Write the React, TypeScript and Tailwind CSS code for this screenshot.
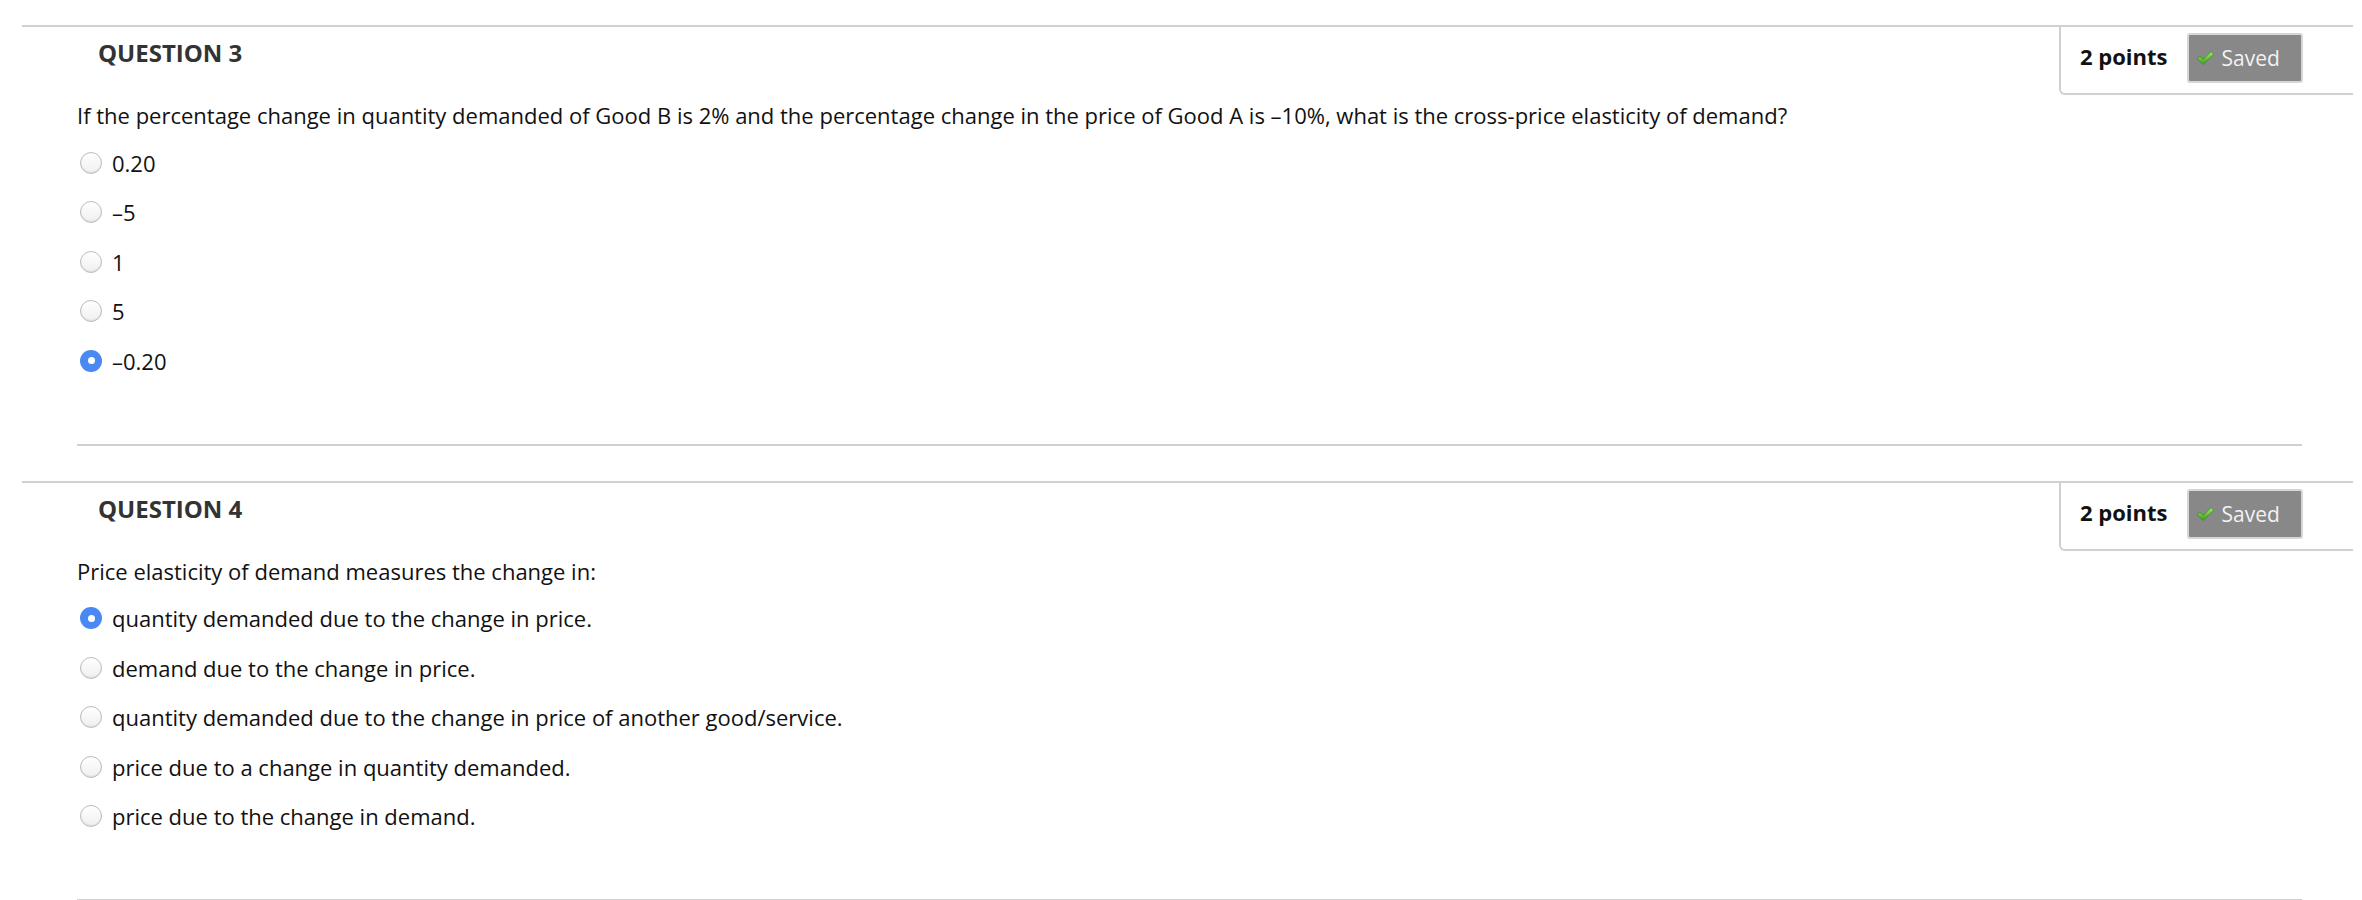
import React from "react";

type Q = {
  title: string;
  text: string;
  options: string[];
  selected: number;
};

const questions: Q[] = [
  {
    title: "QUESTION 3",
    text: "If the percentage change in quantity demanded of Good B is 2% and the percentage change in the price of Good A is \u201310%, what is the cross-price elasticity of demand?",
    options: ["0.20", "\u20135", "1", "5", "\u20130.20"],
    selected: 4,
  },
  {
    title: "QUESTION 4",
    text: "Price elasticity of demand measures the change in:",
    options: [
      "quantity demanded due to the change in price.",
      "demand due to the change in price.",
      "quantity demanded due to the change in price of another good/service.",
      "price due to a change in quantity demanded.",
      "price due to the change in demand.",
    ],
    selected: 0,
  },
];

function Check() {
  return (
    <svg width="19" height="16" viewBox="0 0 19 16" className="shrink-0">
      <defs>
        <linearGradient id="chk" x1="0" y1="0" x2="0" y2="1">
          <stop offset="0" stopColor="#9be86a" />
          <stop offset="1" stopColor="#3f9e1e" />
        </linearGradient>
      </defs>
      <path
        d="M1 8.8 L3.9 6 L7.2 9.2 L15 1.5 L17.8 4.3 L7.2 14.5 Z"
        fill="url(#chk)"
        stroke="#3f8a22"
        strokeWidth="0.8"
        strokeLinejoin="round"
      />
    </svg>
  );
}

function Radio({ on }: { on: boolean }) {
  if (on) {
    return (
      <span className="flex h-[22px] w-[22px] shrink-0 items-center justify-center rounded-full bg-[#4a89f3]">
        <span className="h-[7px] w-[7px] rounded-full bg-white" />
      </span>
    );
  }
  return (
    <span className="h-[22px] w-[22px] shrink-0 rounded-full border border-[#bcbcbc] bg-gradient-to-b from-white to-[#efefef] shadow-[inset_0_-1px_1px_rgba(0,0,0,0.08)]" />
  );
}

function Question({ q }: { q: Q }) {
  return (
    <section className="ml-[22px] mr-[9px] border-t-2 border-[#d0d0d0]">
      <div className="flex items-start justify-between">
        <h2 className="ml-[76px] mt-[10px] text-[24px] font-bold leading-[32px] text-[#333]">
          {q.title}
        </h2>
        <div className="flex h-[68px] w-[294px] items-start gap-[19px] rounded-bl-[6px] border-b-2 border-l-2 border-[#d0d0d0] pl-[19px]">
          <span className="mt-[14px] text-[22px] font-bold leading-[30px] text-[#111]">2 points</span>
          <span className="mt-[6px] flex h-[50px] w-[116px] items-center gap-[7px] rounded-[3px] border-2 border-[#d6d6d6] bg-[#888888] pl-[7px]">
            <Check />
            <span className="text-[21px] leading-[28px] text-[#f2f2f2]">Saved</span>
          </span>
        </div>
      </div>
      <p className="ml-[55px] mt-[4px] text-[22px] leading-[32px] text-[#111]">{q.text}</p>
      <div className="ml-[58px] mt-[7px] flex flex-col">
        {q.options.map((o, i) => (
          <label key={i} className="flex h-[49.5px] items-center gap-[10px]">
            <Radio on={i === q.selected} />
            <span className="text-[22px] leading-[32px] text-[#111]">{o}</span>
          </label>
        ))}
      </div>
      <div className="ml-[55px] mr-[51px] mt-[58px] mb-[35px] h-[2px] bg-[#d0d0d0]" />
    </section>
  );
}

export default function App() {
  return (
    <div
      className="h-[900px] w-full overflow-hidden bg-white pt-[25px]"
      style={{ fontFamily: '"Open Sans", "Noto Sans", sans-serif' }}
    >
      {questions.map((q) => (
        <Question key={q.title} q={q} />
      ))}
    </div>
  );
}
